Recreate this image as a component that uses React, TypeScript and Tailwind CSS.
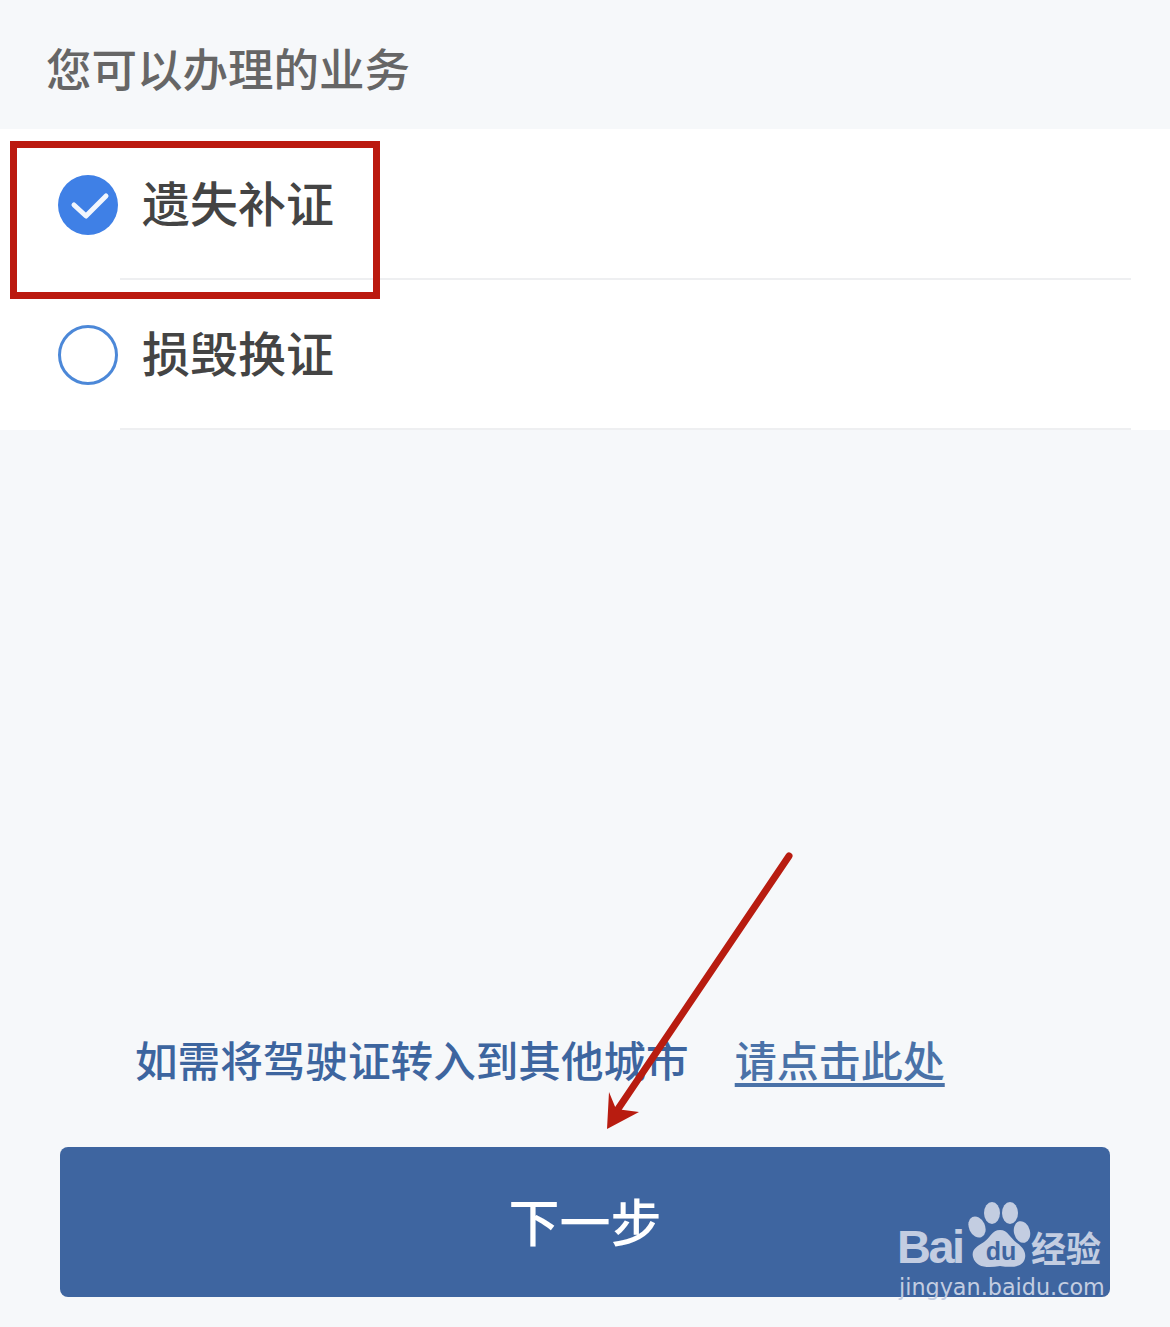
const cjk = "font-['Noto_Sans_CJK_SC','Noto_Sans',sans-serif]";

function Row({ label, checked }: { label: string; checked?: boolean }) {
  return (
    <div className="flex h-[148px] items-center pt-[2px] pl-[58px]">
      {checked ? (
        <svg width="60" height="60" viewBox="0 0 60 60" className="shrink-0">
          <circle cx="30" cy="30" r="30" fill="#3f80e6" />
          <path d="M16 30 L28 41 L48 21" fill="none" stroke="#f2f6fd" strokeWidth="5" strokeLinecap="round" strokeLinejoin="round" />
        </svg>
      ) : (
        <div className="size-[60px] shrink-0 rounded-full border-[3px] border-[#4c88d8]" />
      )}
      <span className="mb-[9px] ml-6 text-[48px] leading-none font-medium text-[#444444]">{label}</span>
    </div>
  );
}

function Divider() {
  return <div className="mr-[39px] ml-[120px] h-[2px] bg-[#eeeff1]" />;
}

function Watermark() {
  return (
    <div className="absolute top-[1200px] left-[896px] h-[100px] w-[214px] text-[#c3cde1]">
      <span className="absolute top-[22px] left-[1px] font-['Liberation_Sans',sans-serif] text-[47px] leading-[50px] font-bold tracking-[-2.5px]">Bai</span>
      <svg width="70" height="70" viewBox="0 0 70 70" className="absolute top-0 left-[72px]">
        <ellipse cx="24" cy="13" rx="8" ry="11" fill="currentColor" />
        <ellipse cx="42" cy="13" rx="8" ry="11" fill="currentColor" />
        <ellipse cx="9" cy="27" rx="8" ry="11" transform="rotate(-25 9 27)" fill="currentColor" />
        <ellipse cx="54" cy="32" rx="8" ry="11" transform="rotate(-15 54 32)" fill="currentColor" />
        <path d="M32 30 C40 30 42 38 49 43 C56 48 58 53 57 58 C55 67 45 68 32 66 C20 68 8 68 5 57 C3 49 10 46 16 42 C22 38 24 30 32 30 Z" fill="currentColor" />
        <text x="33" y="60" textAnchor="middle" fontFamily="Liberation Sans" fontSize="25" fontWeight="700" fill="#3e65a0">du</text>
      </svg>
      <span className={`absolute top-[27px] left-[135px] ${cjk} text-[35px] leading-[40px] font-bold`}>经验</span>
      <span className="absolute top-[73px] left-[3px] font-['DejaVu_Sans',sans-serif] text-[22.3px] leading-[28px] whitespace-nowrap">jingyan.baidu.com</span>
    </div>
  );
}

export default function App() {
  return (
    <div className={`relative flex h-[1327px] w-[1170px] flex-col overflow-hidden bg-[#f6f8fa] ${cjk}`}>
      <div className="flex h-[129px] items-center pt-[6px] pl-[46px]">
        <h1 className="text-[45.5px] leading-none font-medium text-[#666666]">您可以办理的业务</h1>
      </div>

      <div className="bg-white pt-px">
        <Row label="遗失补证" checked />
        <Divider />
        <Row label="损毁换证" />
        <Divider />
      </div>

      <div className="flex-1" />

      <div className="flex h-[60px] items-center pb-[4px] pl-[135px] text-[42.6px] leading-none font-medium text-[#3d659f]">
        <span>如需将驾驶证转入到其他城市</span>
        <a className="ml-[46px] text-[42px] text-[#4a72a8] underline underline-offset-[6px]">请点击此处</a>
      </div>

      <div className="mx-[60px] mt-[56px] mb-[30px] flex h-[150px] items-center justify-center rounded-lg bg-[#3e65a0]">
        <button className="pb-[4px] text-[51px] leading-none font-medium text-white">下一步</button>
      </div>

      {/* annotations on top of the screenshot */}
      <div className="absolute top-[141px] left-[10px] h-[158px] w-[370px] border-[7px] border-[#bb1a0f]" />
      <svg width="1170" height="1327" className="pointer-events-none absolute top-0 left-0">
        <path d="M789 856 L616 1112" stroke="#b81c10" strokeWidth="7" strokeLinecap="round" fill="none" />
        <path d="M607 1129 L609 1092 L616 1109 L639 1112 Z" fill="#b81c10" />
      </svg>
      <Watermark />
    </div>
  );
}
